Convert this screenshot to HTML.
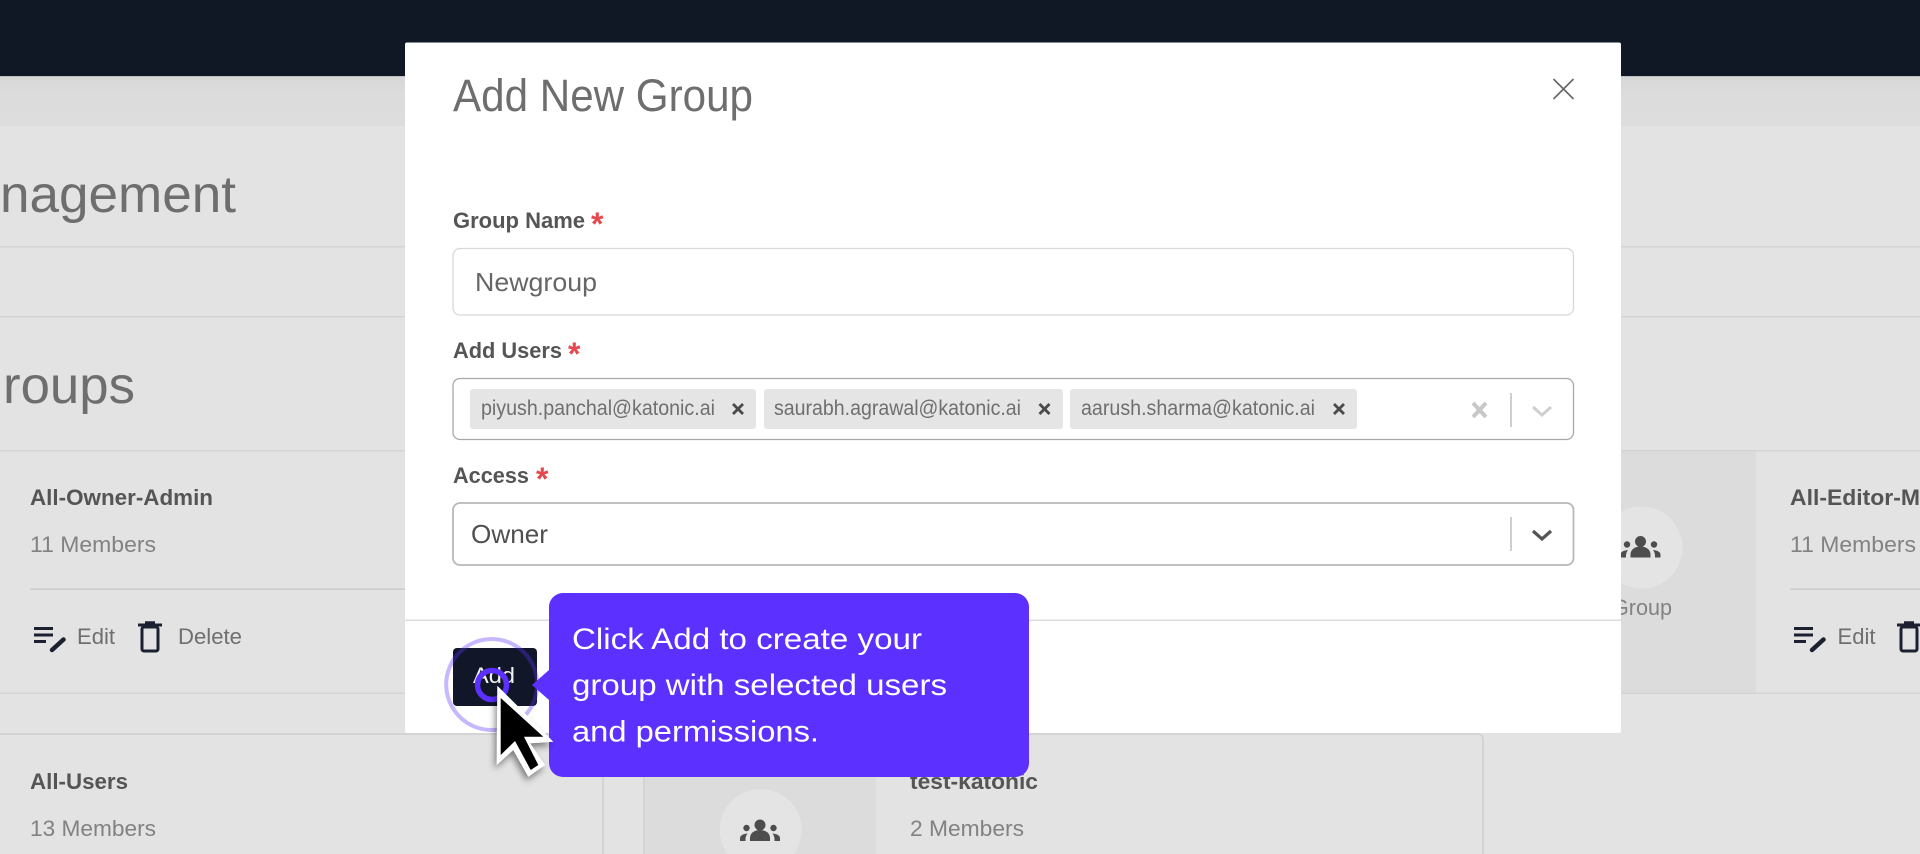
<!DOCTYPE html>
<html lang="en">
<head>
<meta charset="utf-8">
<title>Add New Group</title>
<style>
html,body{margin:0;padding:0;width:1920px;height:854px;overflow:hidden;background:#e3e3e3}
svg{display:block}
text{font-family:"Liberation Sans",Arial,sans-serif}
.h{font-size:52px;fill:#6e6e6e}
.b{font-size:22px;font-weight:700;fill:#555}
.m{font-size:22.5px;fill:#828282}
.a{font-size:22.5px;fill:#6f6f6f}
.chip{font-size:21px;fill:#6f6f6f}
.tip{font-size:30px;fill:#fff}
.req{font-size:32px;font-weight:700;fill:#e5484d}
</style>
</head>
<body>
<svg xmlns="http://www.w3.org/2000/svg" width="1920" height="854" viewBox="0 0 1920 854">
<defs>
  <linearGradient id="band" x1="0" y1="0" x2="0" y2="1">
    <stop offset="0" stop-color="#d6d6d6"/><stop offset=".35" stop-color="#dcdcdc"/><stop offset="1" stop-color="#dddddd"/>
  </linearGradient>
  <g id="people" fill="#4d4d4d">
    <circle cx="0" cy="-6" r="5.5"/>
    <path d="M-10 10v-3c0-5 4.500-8 10-8s10 3 10 8v3z"/>
    <circle cx="-13.500" cy="-3" r="3.200"/>
    <circle cx="13.500" cy="-3" r="3.200"/>
    <path d="M-20 10v-2.500c0-3 2.500-4.500 7.500-5-1.200 1.500-2 3.500-2 5.500v2z"/>
    <path d="M20 10v-2.500c0-3-2.500-4.500-7.500-5 1.200 1.500 2 3.500 2 5.500v2z"/>
  </g>
  <g id="editic" fill="none" stroke="#1b2130" stroke-width="3">
    <path d="M34 628.500h19M34 635h19M34 641.500h12"/>
    <path d="M52 650l11.500-10.500" stroke-width="4.500" stroke-linecap="round"/>
  </g>
  <g id="trash" fill="none" stroke="#1b2130">
    <path d="M138 625h24" stroke-width="3"/>
    <path d="M145 622.500h10" stroke-width="2.500"/>
    <rect x="142" y="627" width="16" height="24" rx="2" stroke-width="3"/>
  </g>
  <filter id="sh" x="-30%" y="-30%" width="170%" height="170%">
    <feDropShadow dx="-2" dy="4" stdDeviation="3.500" flood-color="#000" flood-opacity=".45"/>
  </filter>
</defs>

<!-- Page background -->
<rect width="1920" height="854" fill="#e3e3e3"/>
<rect y="76" width="1920" height="50" fill="url(#band)"/>
<rect width="1920" height="76" fill="#101725"/>
<rect y="76" width="1920" height="1" fill="#bfbfbf"/>

<!-- Headings -->
<text class="h" x="0" y="212" textLength="236" lengthAdjust="spacingAndGlyphs">nagement</text>
<rect y="246" width="1920" height="1.500" fill="#d4d4d4"/>
<rect y="316" width="1920" height="1.500" fill="#d4d4d4"/>
<text class="h" x="3" y="403" textLength="132" lengthAdjust="spacingAndGlyphs">roups</text>

<!-- Group row 1 -->
<rect y="450" width="1920" height="1.500" fill="#d4d4d4"/>
<rect y="692.500" width="1920" height="1.500" fill="#d4d4d4"/>
<rect x="1500" y="451.500" width="256" height="241" fill="#dcdcdc"/>
<circle cx="1641.500" cy="547.500" r="41" fill="#e4e4e4"/>
<use href="#people" x="1640.500" y="547.500"/>
<text class="m" x="1612" y="615" textLength="60" lengthAdjust="spacingAndGlyphs">Group</text>

<text class="b" x="30" y="505" textLength="183" lengthAdjust="spacingAndGlyphs">All-Owner-Admin</text>
<text class="m" x="30" y="552" textLength="126" lengthAdjust="spacingAndGlyphs">11 Members</text>
<rect x="30" y="588.500" width="400" height="1.300" fill="#c8c8c8"/>
<use href="#editic"/>
<text class="a" x="77" y="644" textLength="38" lengthAdjust="spacingAndGlyphs">Edit</text>
<use href="#trash"/>
<text class="a" x="178" y="644" textLength="64" lengthAdjust="spacingAndGlyphs">Delete</text>

<text class="b" x="1790" y="505" textLength="130" lengthAdjust="spacingAndGlyphs">All-Editor-M</text>
<text class="m" x="1790" y="552" textLength="126" lengthAdjust="spacingAndGlyphs">11 Members</text>
<rect x="1790" y="588.500" width="130" height="1.300" fill="#c8c8c8"/>
<use href="#editic" x="1760"/>
<text class="a" x="1837.500" y="644" textLength="38" lengthAdjust="spacingAndGlyphs">Edit</text>
<use href="#trash" x="1759"/>

<!-- Group row 2 -->
<rect x="-10" y="734" width="613" height="140" rx="5" fill="#e3e3e3" stroke="#d0d0d0" stroke-width="1.500"/>
<text class="b" x="30" y="789" textLength="98" lengthAdjust="spacingAndGlyphs">All-Users</text>
<text class="m" x="30" y="836" textLength="126" lengthAdjust="spacingAndGlyphs">13 Members</text>

<rect x="644" y="734" width="839" height="140" rx="5" fill="#e3e3e3" stroke="#d0d0d0" stroke-width="1.500"/>
<rect x="645" y="735" width="231" height="130" fill="#dcdcdc"/>
<circle cx="760.700" cy="830" r="41" fill="#e4e4e4"/>
<use href="#people" x="760" y="831"/>
<text class="b" x="910" y="789" textLength="128" lengthAdjust="spacingAndGlyphs">test-katonic</text>
<text class="m" x="910" y="836" textLength="114" lengthAdjust="spacingAndGlyphs">2 Members</text>

<!-- Modal -->
<rect x="405" y="42.500" width="1216" height="690.500" rx="2" fill="#fff"/>
<text x="453" y="111" font-size="45" fill="#6e6e6e" textLength="300" lengthAdjust="spacingAndGlyphs">Add New Group</text>
<path d="M1553.500 79l20 20M1573.500 79l-20 20" stroke="#666" stroke-width="1.600" fill="none"/>

<text class="b" x="453" y="228" textLength="132" lengthAdjust="spacingAndGlyphs">Group Name</text>
<text class="req" x="591" y="235">*</text>
<rect x="453" y="248.500" width="1120.500" height="66.500" rx="7" fill="#fff" stroke="#d8d8d8" stroke-width="1.300"/>
<text x="475" y="291" font-size="26" fill="#666" textLength="122" lengthAdjust="spacingAndGlyphs">Newgroup</text>

<text class="b" x="453" y="358" textLength="109" lengthAdjust="spacingAndGlyphs">Add Users</text>
<text class="req" x="568" y="365">*</text>
<rect x="453" y="378.500" width="1120.500" height="61" rx="7" fill="#fff" stroke="#a8a8a8" stroke-width="1.300"/>

<rect x="470" y="389" width="286" height="40" rx="3" fill="#e5e5e5"/>
<text class="chip" x="481" y="415" textLength="234" lengthAdjust="spacingAndGlyphs">piyush.panchal@katonic.ai</text>
<path d="M733 404l10 10M743 404l-10 10" stroke="#4a4a4a" stroke-width="2.800" fill="none"/>
<rect x="764" y="389" width="299" height="40" rx="3" fill="#e5e5e5"/>
<text class="chip" x="774" y="415" textLength="247" lengthAdjust="spacingAndGlyphs">saurabh.agrawal@katonic.ai</text>
<path d="M1039.500 404l10 10M1049.500 404l-10 10" stroke="#4a4a4a" stroke-width="2.800" fill="none"/>
<rect x="1070" y="389" width="287" height="40" rx="3" fill="#e5e5e5"/>
<text class="chip" x="1081" y="415" textLength="234" lengthAdjust="spacingAndGlyphs">aarush.sharma@katonic.ai</text>
<path d="M1334 404l10 10M1344 404l-10 10" stroke="#4a4a4a" stroke-width="2.800" fill="none"/>

<path d="M1473 403l13 14M1486 403l-13 14" stroke="#c8c8c8" stroke-width="4" fill="none"/>
<rect x="1510" y="393" width="2" height="34" fill="#cfcfcf"/>
<path d="M1533 407l9 8 9-8" stroke="#cfcfcf" stroke-width="3" fill="none"/>

<text class="b" x="453" y="483" textLength="76" lengthAdjust="spacingAndGlyphs">Access</text>
<text class="req" x="536" y="490">*</text>
<rect x="453" y="503" width="1120.500" height="62" rx="7" fill="#fff" stroke="#b8b8b8" stroke-width="1.800"/>
<text x="471" y="543" font-size="26" fill="#4f4f4f" textLength="77" lengthAdjust="spacingAndGlyphs">Owner</text>
<rect x="1510" y="517" width="2" height="34" fill="#cfcfcf"/>
<path d="M1533 531l9 8 9-8" stroke="#555" stroke-width="3.200" fill="none"/>

<rect x="405" y="619.500" width="1216" height="1.500" fill="#dcdcdc"/>

<!-- Add button -->
<rect x="453" y="648" width="84" height="58" rx="4" fill="#111728"/>
<text x="473" y="683" font-size="22" fill="#f2f2f2" textLength="42" lengthAdjust="spacingAndGlyphs">Add</text>

<!-- Tooltip -->
<path d="M549 670L532 685L549 700z" fill="#5c30ff"/>
<rect x="549" y="593" width="480" height="184" rx="14" fill="#5c30ff"/>
<text class="tip" x="572" y="649" textLength="350" lengthAdjust="spacingAndGlyphs">Click Add to create your</text>
<text class="tip" x="572" y="695" textLength="375" lengthAdjust="spacingAndGlyphs">group with selected users</text>
<text class="tip" x="572" y="741.500" textLength="247" lengthAdjust="spacingAndGlyphs">and permissions.</text>

<!-- Click indicator -->
<circle cx="491.700" cy="684.500" r="45.500" fill="none" stroke="#5c30ff" stroke-opacity=".35" stroke-width="4"/>
<circle cx="492" cy="685" r="14.500" fill="none" stroke="#5c30ff" stroke-width="5.500"/>
<path d="M497.300 685.700L496.700 765L513.300 750L528.300 776.700L545 765L530 743.300L553.300 741.700Z" fill="#fff" filter="url(#sh)"/>
<path d="M500.700 698L500.700 755L515 741L530.700 770L538.300 765L524 736.700L543.300 736.700Z" fill="#000"/>
</svg>
</body>
</html>
